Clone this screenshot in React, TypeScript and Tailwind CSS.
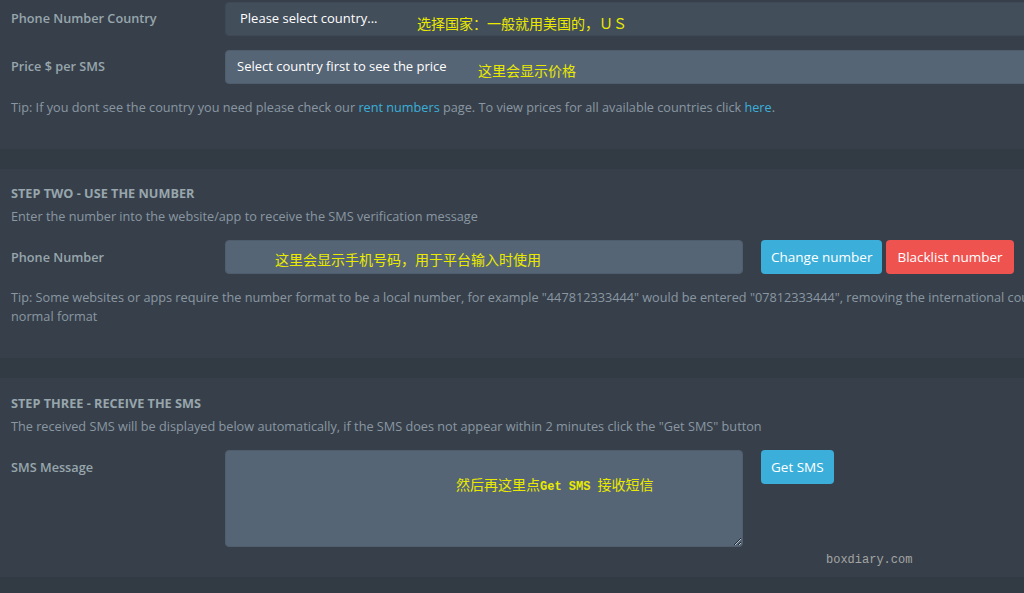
import React from "react";

const FONT = { fontFamily: '"Open Sans", "Noto Sans CJK SC", sans-serif' };

const Note = ({ children, className }: { children: React.ReactNode; className: string }) => (
  <span
    className={`pointer-events-none absolute whitespace-nowrap text-[14px] leading-none text-[#eaea00] ${className}`}
    style={{ fontFamily: '"Liberation Mono", "Noto Sans CJK SC", monospace' }}
  >
    {children}
  </span>
);

const Label = ({ title }: { title: string }) => (
  <div className="w-[225px] shrink-0 pl-[11px] text-[12.7px] font-semibold text-[#98a6ad]">{title}</div>
);

const App = () => {
  return (
    <div className="h-[593px] w-[1024px] overflow-hidden bg-[#323a44]" style={FONT}>
      <div className="w-[1120px]">
        {/* Step one (bottom part) */}
        <section className="relative bg-[#37404a] pt-[2px] pb-[32px]">
          <div className="flex items-center">
            <Label title="Phone Number Country" />
            <div className="flex h-[34px] flex-1 items-center rounded-[4px] border border-[#3e4856] bg-[#434e5b] pl-[14px] text-[13px] text-white">
              Please select country...
            </div>
          </div>
          <div className="mt-[14px] flex items-center">
            <Label title="Price $ per SMS" />
            <div className="flex h-[34px] flex-1 items-center rounded-[4px] border border-[#4f5d6c] bg-[#566575] pl-[11px] text-[13px] text-white">
              Select country first to see the price
            </div>
          </div>
          <p className="mt-[14px] pl-[11px] text-[12.7px] text-[#8a97a3]">
            Tip: If you dont see the country you need please check our{" "}
            <span className="text-[#3bafda]">rent numbers</span> page. To view prices for all available countries
            click <span className="text-[#3bafda]">here</span>.
          </p>
          <Note className="left-[417px] top-[18px]">选择国家：一般就用美国的，ＵＳ</Note>
          <Note className="left-[478px] top-[65px]">这里会显示价格</Note>
        </section>

        {/* Step two */}
        <section className="relative mt-[20px] bg-[#37404a] pt-[15px] pb-[32px]">
          <h3 className="pl-[11px] text-[12.7px] font-bold uppercase text-[#98a6ad]">Step Two - Use the number</h3>
          <p className="mt-[4px] pl-[11px] text-[12.7px] text-[#8a97a3]">
            Enter the number into the website/app to receive the SMS verification message
          </p>
          <div className="mt-[14px] flex items-center">
            <Label title="Phone Number" />
            <div className="h-[34px] w-[518px] rounded-[4px] border border-[#4f5d6c] bg-[#566575]" />
            <button className="ml-[18px] h-[34px] rounded-[4px] bg-[#3bafda] px-[10px] text-[13.5px] text-white">
              Change number
            </button>
            <button className="ml-[4px] h-[34px] rounded-[4px] bg-[#ef5350] px-[11px] text-[13.5px] text-white">
              Blacklist number
            </button>
          </div>
          <p className="mt-[14px] pl-[11px] text-[12.7px] leading-[19px] text-[#8a97a3]">
            <span className="whitespace-nowrap">
              Tip: Some websites or apps require the number format to be a local number, for example "447812333444"
              would be entered "07812333444", removing the international country code, please use the number in the
            </span>
            <br />
            normal format
          </p>
          <Note className="left-[275px] top-[85px]">这里会显示手机号码，用于平台输入时使用</Note>
        </section>

        {/* Step three */}
        <section className="relative mt-[20px] bg-[#37404a] pt-[16px] pb-[30px]">
          <h3 className="pl-[11px] text-[12.7px] font-bold uppercase text-[#98a6ad]">Step Three - Receive the SMS</h3>
          <p className="mt-[4px] pl-[11px] text-[12.7px] text-[#8a97a3]">
            The received SMS will be displayed below automatically, if the SMS does not appear within 2 minutes click the
            "Get SMS" button
          </p>
          <div className="mt-[14px] flex items-start">
            <div className="pt-[8px]">
              <Label title="SMS Message" />
            </div>
            <textarea
              readOnly
              className="h-[97px] w-[518px] resize rounded-[4px] border border-[#4f5d6c] bg-[#566575] outline-none"
            />
            <button className="ml-[18px] h-[34px] rounded-[4px] bg-[#3bafda] px-[10px] text-[13.5px] text-white">
              Get SMS
            </button>
          </div>
          <Note className="left-[456px] top-[101px]">
            然后再这里点<span className="text-[12px] font-bold">Get SMS </span>接收短信
          </Note>
          <span
            className="absolute left-[826px] top-[173px] text-[12px] text-[#a4a4a4]"
            style={{ fontFamily: '"Liberation Mono", "DejaVu Sans Mono", monospace' }}
          >
            boxdiary.com
          </span>
        </section>
      </div>
    </div>
  );
};

export default App;
